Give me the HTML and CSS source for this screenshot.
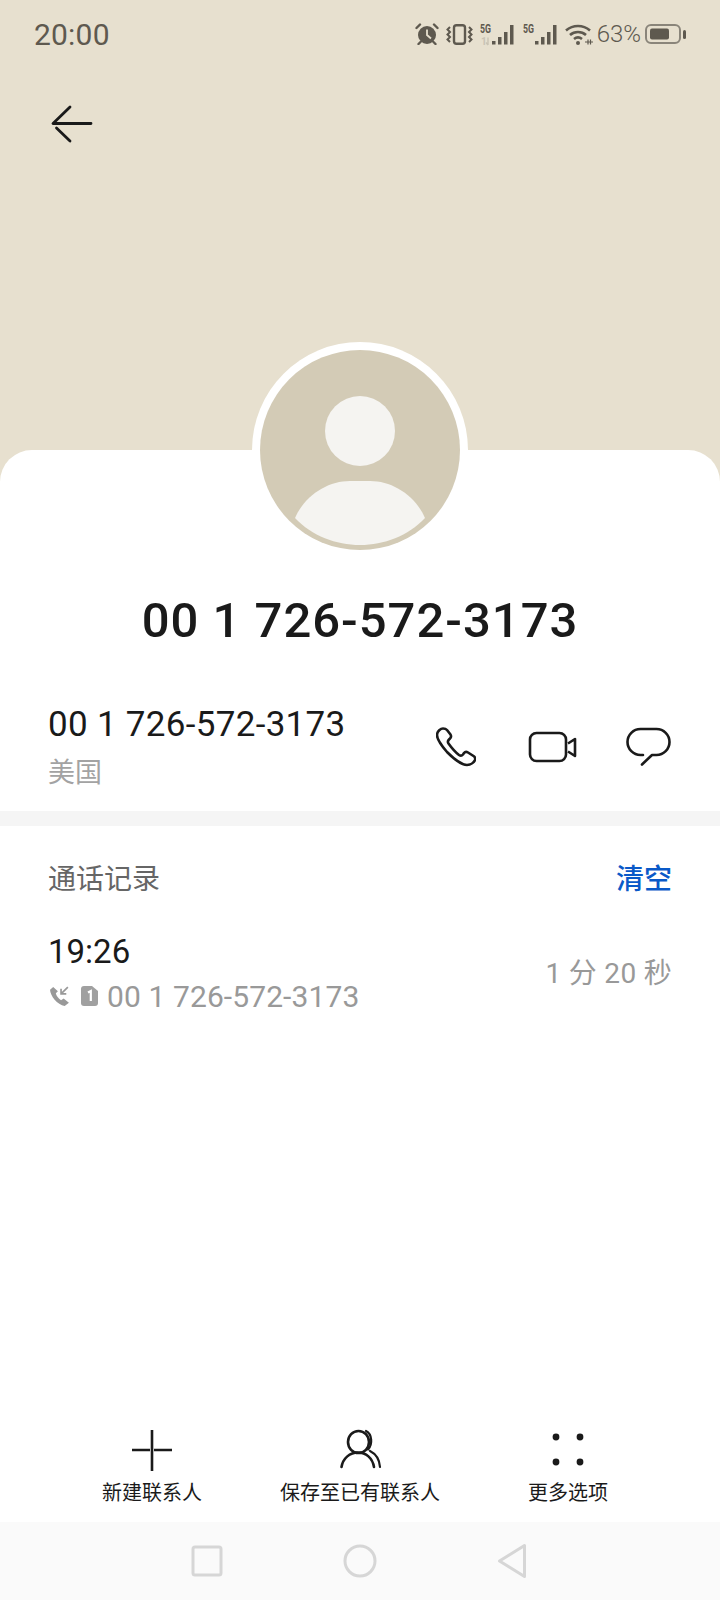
FILE: index.html
```html
<!DOCTYPE html>
<html lang="zh-CN">
  <head>
    <meta charset="UTF-8" />
    <meta name="viewport" content="width=device-width, initial-scale=1.0" />
    <title>通话详情</title>
    <link rel="stylesheet" href="styles.css">
  </head>
  <body>
    <div class="page">
      <div class="hero">
        <div class="status-bar">
          <span class="clock">20:00</span>
          <div class="status-icons">
            <svg width="24" height="22" viewBox="0 0 24 22">
              <circle cx="12" cy="12" r="9" fill="#5e594f"/>
              <path d="M12 6.500V12l4 3.500" fill="none" stroke="#e7e0cf" stroke-width="1.800"/>
              <path d="M1.500 5 5 1.500M22.500 5 19 1.500M5.500 19 3.500 21M18.500 19l2 2" stroke="#5e594f" stroke-width="2.400" stroke-linecap="round"/>
            </svg>
            <svg width="27" height="21" viewBox="0 0 27 21">
              <rect x="8" y="1.200" width="11" height="18.600" rx="2.500" fill="none" stroke="#5e594f" stroke-width="2.400"/>
              <path d="M4 3 1.500 5.500 4 8 1.500 10.500 4 13 1.500 15.500 4 18M23 3l2.500 2.500L23 8l2.500 2.500L23 13l2.500 2.500L23 18" fill="none" stroke="#5e594f" stroke-width="2"/>
            </svg>
            <svg width="36" height="28" viewBox="0 -3 36 28">
              <text x="0" y="10" class="net-label" textLength="11" lengthAdjust="spacingAndGlyphs">5G</text>
              <text x="1" y="22" class="net-label net-dim">1</text>
              <path d="M8 14.500V22M8 22l-2-2.500" fill="none" stroke="#c9c3b4" stroke-width="1.400"/>
              <path d="M12 18h3.500v3.500H12zM18 14h3.500v7.500H18zM24 9h3.500v12.500H24zM30 2h3.500v19.500H30z" fill="#5e594f"/>
            </svg>
            <svg width="36" height="28" viewBox="0 -3 36 28">
              <text x="0" y="10" class="net-label" textLength="11" lengthAdjust="spacingAndGlyphs">5G</text>
              <path d="M12 18h3.500v3.500H12zM18 14h3.500v7.500H18zM24 9h3.500v12.500H24zM30 2h3.500v19.500H30z" fill="#5e594f"/>
            </svg>
            <svg class="wifi" width="28" height="22" viewBox="0 0 28 22">
              <path d="M1 7.500C8 1.500 18 1.500 25 7.500M5 12c4.500-4 11.500-4 16 0M9 16c2.500-2 5.500-2 8 0" fill="none" stroke="#5e594f" stroke-width="2.600"/>
              <circle cx="13" cy="20" r="2" fill="#5e594f"/>
              <path d="M20 19h8M23 16.500v5M25.500 16.500v5" stroke="#5e594f" stroke-width="1.200"/>
            </svg>
            <span class="battery-text">63%</span>
            <svg width="41" height="20" viewBox="0 0 41 20">
              <rect x="1" y="1" width="34" height="18" rx="5" fill="none" stroke="#8a857a" stroke-width="2"/>
              <rect x="5" y="4.500" width="19" height="11" rx="2" fill="#5e594f"/>
              <rect x="38" y="6" width="3" height="9" rx="1.500" fill="#5e594f"/>
            </svg>
          </div>
        </div>
        <div class="top-nav">
          <svg width="44" height="40" viewBox="0 0 44 40">
            <path d="M20 2 3 18.500H41M20 36 6.500 23" fill="none" stroke="#1a1a1a" stroke-width="2.800" stroke-linecap="round" stroke-linejoin="round"/>
          </svg>
        </div>
      </div>

      <div class="card">
        <div class="avatar">
          <svg width="200" height="200" viewBox="0 0 200 200">
            <circle cx="100" cy="100" r="100" fill="#d3cbb6"/>
            <circle cx="100" cy="81" r="35" fill="#f5f4f1"/>
            <path d="M35 168C45 145 68 131 90 131H110C132 131 155 145 165 168C148 186 124 195 100 195C76 195 52 186 35 168Z" fill="#f5f4f1"/>
          </svg>
        </div>

        <h1 class="title">00 1 726-572-3173</h1>

        <div class="number-row">
          <div class="number-info">
            <div class="number">00 1 726-572-3173</div>
            <div class="region">美国</div>
          </div>
          <div class="number-actions">
            <svg class="phone" width="40" height="40" viewBox="0 0 40 40">
              <path d="M7 1.500C5 1.500 1 4 1 8C1 12 5 18 11 25C17 31 25 38 31 38C35 38 38 35 39 33C39.500 31.500 39 30 37.500 29L32 25.500C30.500 24.500 29 24.700 28 26L27 27.500C26 28.700 24.500 29 23 28C19 25 15 20 12.500 16.500C11.500 15 12 13.500 13 12.500L14 11.500C15.300 10.300 15.300 9 14.500 7.500L11 3C10 1.800 8.500 1.500 7 1.500Z" fill="none" stroke="#1a1a1a" stroke-width="2.600" stroke-linejoin="round"/>
            </svg>
            <svg width="49" height="32" viewBox="0 0 49 32">
              <rect x="2" y="2" width="36" height="28" rx="6.500" fill="none" stroke="#1a1a1a" stroke-width="2.600"/>
              <path d="M40 12.500 47 8V25L40 20.500" fill="none" stroke="#1a1a1a" stroke-width="2.600" stroke-linejoin="round"/>
            </svg>
            <svg width="45" height="39" viewBox="0 0 45 39">
              <path d="M17 28H14.500A13 13 0 0 1 14.500 2H30.500A13 13 0 0 1 30.500 28H26L16 37.500" fill="none" stroke="#1a1a1a" stroke-width="2.600" stroke-linecap="round" stroke-linejoin="round"/>
            </svg>
          </div>
        </div>

        <div class="divider"></div>

        <div class="log-header">
          <span class="log-title">通话记录</span>
          <span class="log-clear">清空</span>
        </div>

        <div class="log-row">
          <div>
            <div class="log-time">19:26</div>
            <div class="log-sub">
              <svg class="call-icon" width="22" height="21" viewBox="0 0 21 20">
                <path d="M4 1 1 3.500C1 9 8 18 15 19L19 16 14 12 11.500 13.500C9 12 7 9.500 6.500 7L8.500 5Z" fill="#999"/>
                <path d="M18 1 11.500 7.500M11.500 2.500V7.500H16.500" fill="none" stroke="#999" stroke-width="1.600"/>
              </svg>
              <svg class="sim-icon" width="17" height="20" viewBox="0 0 17 20">
                <path d="M3 0H11L17 5V17A3 3 0 0 1 14 20H3A3 3 0 0 1 0 17V3A3 3 0 0 1 3 0Z" fill="#a0a0a0"/>
                <path d="M7 6.500 9.800 5V15" fill="none" stroke="#fff" stroke-width="2.200"/>
              </svg>
              <span class="log-number">00 1 726-572-3173</span>
            </div>
          </div>
          <div class="log-duration">1 分 20 秒</div>
        </div>

        <div class="bottom-actions">
          <div class="action">
            <svg width="44" height="44" viewBox="0 0 44 44">
              <path d="M2 22H20M24 22H42M22 2V43" fill="none" stroke="#1a1a1a" stroke-width="2.600"/>
            </svg>
            <span>新建联系人</span>
          </div>
          <div class="action">
            <svg width="44" height="44" viewBox="338 1428 44 44">
              <ellipse cx="358.500" cy="1442" rx="10.500" ry="11" fill="none" stroke="#1a1a1a" stroke-width="2.600"/>
              <path d="M341.500 1467C343 1458 350 1452.500 358 1452.500C366 1452.500 372.500 1458 374 1467" fill="none" stroke="#1a1a1a" stroke-width="2.600" stroke-linecap="round"/>
              <path d="M366 1431C372 1434 373 1444 368 1449.500M370 1451C376 1454 379.500 1460 380 1467" fill="none" stroke="#1a1a1a" stroke-width="2.200" stroke-linecap="round"/>
            </svg>
            <span>保存至已有联系人</span>
          </div>
          <div class="action">
            <svg width="44" height="44" viewBox="0 0 44 44">
              <circle cx="10" cy="9" r="3.400" fill="#1a1a1a"/>
              <circle cx="34" cy="9" r="3.400" fill="#1a1a1a"/>
              <circle cx="10" cy="34" r="3.400" fill="#1a1a1a"/>
              <circle cx="34" cy="34" r="3.400" fill="#1a1a1a"/>
            </svg>
            <span>更多选项</span>
          </div>
        </div>
      </div>

      <div class="nav-bar">
        <svg width="32" height="32" viewBox="0 0 32 32">
          <rect x="2" y="2" width="28" height="28" rx="2" fill="none" stroke="#d6d6d6" stroke-width="3"/>
        </svg>
        <svg width="34" height="34" viewBox="0 0 34 34">
          <circle cx="17" cy="17" r="15" fill="none" stroke="#d6d6d6" stroke-width="3"/>
        </svg>
        <svg width="30" height="36" viewBox="0 0 30 36">
          <path d="M27.500 2.500V33.500L2.500 18Z" fill="none" stroke="#d6d6d6" stroke-width="3" stroke-linejoin="round"/>
        </svg>
      </div>
    </div>
  </body>
</html>
```

FILE: styles.css
```css
* {
  box-sizing: border-box;
}
body {
  margin: 0;
  font-family: Roboto, "Noto Sans CJK SC", sans-serif;
  color: #1a1a1a;
}
.page {
  width: 720px;
  height: 1600px;
  display: flex;
  flex-direction: column;
  background-color: #e7e0cf;
}

/* status bar + back arrow */
.hero {
  height: 450px;
  flex-shrink: 0;
}
.status-bar {
  height: 68px;
  padding: 0 34px;
  display: flex;
  justify-content: space-between;
  align-items: center;
  color: #5e594f;
}
.clock {
  font-size: 30px;
  letter-spacing: 0.2px;
}
.status-icons {
  display: flex;
  align-items: center;
  gap: 7px;
}
.wifi {
  margin-left: -1px;
}
.battery-text {
  font-size: 24px;
  font-weight: 300;
  margin: 0 -3px;
}
.net-label {
  font: 700 12px Roboto, sans-serif;
  fill: #5e594f;
}
.net-dim {
  font-size: 10px;
  fill: #c9c3b4;
}
.top-nav {
  padding: 37px 0 0 50px;
}

/* white sheet */
.card {
  flex: 1;
  display: flex;
  flex-direction: column;
  background-color: #fff;
  border-radius: 32px 32px 0 0;
}
.avatar {
  width: 216px;
  height: 216px;
  margin: -108px auto 0;
  padding: 8px;
  border-radius: 50%;
  background-color: #fff;
}
.avatar svg {
  display: block;
}
.title {
  margin: 31px 0 0;
  font-size: 49px;
  font-weight: 500;
  letter-spacing: 1px;
  line-height: 64px;
  text-align: center;
}

.number-row {
  height: 158px;
  padding: 34px 49px 0 48px;
  display: flex;
  justify-content: space-between;
  align-items: center;
}
.number {
  font-size: 35px;
  letter-spacing: 0.3px;
  line-height: 48px;
}
.region {
  font-size: 27px;
  line-height: 48px;
  color: #a3a3a3;
}
.number-actions {
  display: flex;
  align-items: center;
  gap: 49px;
  margin-top: -5px;
}
.phone {
  margin-right: 3px;
}
.divider {
  height: 15px;
  background-color: #f5f5f5;
}

/* call log */
.log-header {
  padding: 34px 48px 0 48px;
  display: flex;
  justify-content: space-between;
  font-size: 28px;
  line-height: 40px;
}
.log-title {
  color: #666;
}
.log-clear {
  color: #0a59c8;
  font-weight: 500;
}
.log-row {
  padding: 30px 48px 0;
  display: flex;
  justify-content: space-between;
  align-items: center;
}
.log-time {
  font-size: 33px;
  line-height: 44px;
}
.log-sub {
  display: flex;
  align-items: center;
  height: 44px;
  color: #999;
}
.call-icon {
  margin-left: 1px;
}
.sim-icon {
  margin-left: 10px;
}
.log-number {
  font-size: 30px;
  letter-spacing: 0.1px;
  margin-left: 9px;
}
.log-duration {
  font-size: 28px;
  letter-spacing: 0.3px;
  color: #999;
  margin-bottom: 7px;
}

/* bottom buttons */
.bottom-actions {
  margin-top: auto;
  height: 94px;
  display: grid;
  grid-template-columns: repeat(3, 208px);
  justify-content: center;
}
.action {
  display: flex;
  flex-direction: column;
  align-items: center;
  font-size: 20px;
  line-height: 30px;
}
.action svg {
  margin-bottom: 6px;
}
.nav-bar {
  height: 78px;
  flex-shrink: 0;
  padding-right: 3px;
  display: flex;
  justify-content: center;
  align-items: center;
  gap: 120px;
  background-color: #fafafa;
}
```
